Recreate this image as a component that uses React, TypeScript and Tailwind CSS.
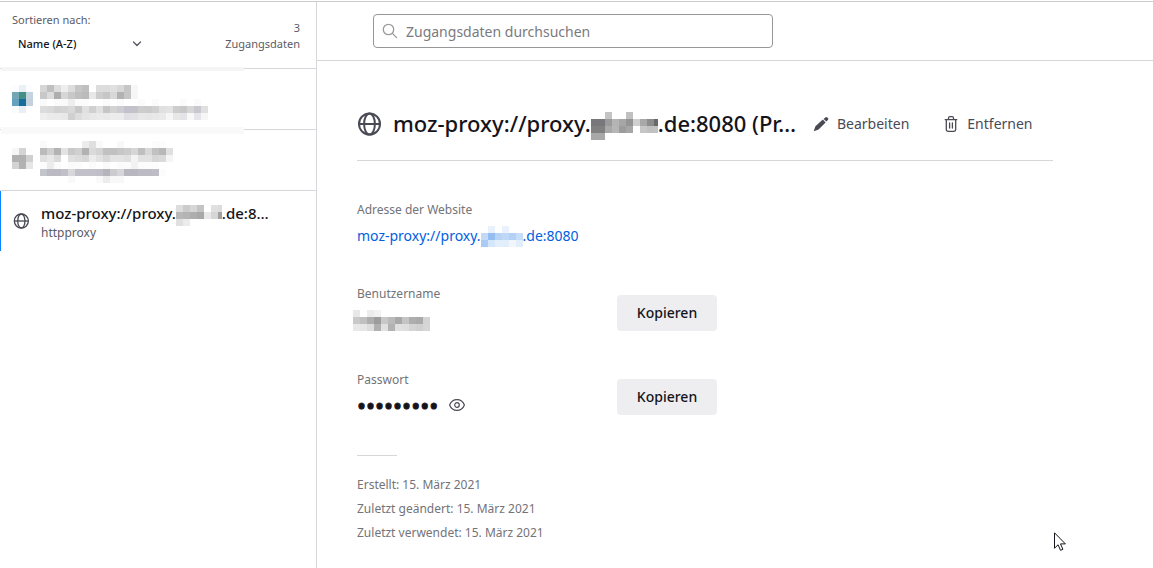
import type { ReactNode } from "react";

const CELL = 7;

/** Pixelated patch that stands in for private text. Cells are hex greys or full hex colours; "--" is empty. */
function Mosaic({ rows, className, label }: { rows: string[]; className?: string; label: string }) {
  const grid = rows.map((row) => row.split(" "));
  const cols = Math.max(...grid.map((row) => row.length));
  return (
    <svg
      role="img"
      aria-label={label}
      width={cols * CELL}
      height={grid.length * CELL}
      shapeRendering="crispEdges"
      className={className}
    >
      {grid.flatMap((row, y) =>
        row.map((cell, x) =>
          cell === "--" ? null : (
            <rect
              key={`${x}-${y}`}
              x={x * CELL}
              y={y * CELL}
              width={CELL}
              height={CELL}
              fill={cell.length === 2 ? `#${cell}${cell}${cell}` : `#${cell}`}
            />
          ),
        ),
      )}
    </svg>
  );
}

const siteIconA = [
  "fafcff e9f0f6 fdfdff",
  "74a7b3 459085 c3d5e0",
  "66a2c0 156f99 c3d1dc",
  "fafbfd e9eff4 --",
];
const siteTextA = [
  "d6 bf dd ee dd c6 bf -- dd dc e0 d8 c6 f7",
  "c8 dc ae d6 c8 bf bb e8 cd c6 d8 b2 c6 f6",
  "fa -- fb fa ee fb fb -- -- fb -- fb -- -- fb -- fb -- -- -- fb -- fb",
  "dc d9 d2 d4 d9 c8 e0 d0 e0 c6 d3 cdccd3 c3c2ca c3c2ca cd cb d0 e0 e3 cd c8 d6 c9c8d0 e0",
  "ee ea ea e8 d0 dd e4 e8 ea e9 ec ec e0e0e4 e2e2e6 e8 e6 e8 ea f6 e7 e4e4e8 f8 e6e6ea f6",
];
const siteIconB = ["f6 d4 fd", "b1 b1 d0", "d3 b2 e6"];
const siteTextB = [
  "fa -- -- -- -- -- ec df f9 -- -- f8 -- -- -- -- fc fc",
  "bb cf b3 e3 c9 d0 b2 da d3 c1 c1 c6 cb d6 bf d8 c1 b8 e0",
  "e0 e8 da -- e0 dc d8 ec e2 d8 e4 e4 e0 f3 e2 e2 d6 da f5",
  "fc ec fb -- fa fb -- fb -- fa -- fb fc f2 fb fc fc",
  "c4c4cc bbbac2 bbbac2 c1c0c8 d8d8dc c2c1c9 c2c1c9 c2c1c9 c0bfc7 b4b4ba cccccf d6d6da b8b7bf b8b7bf bcbbc3 bcbbc3 bebdc5 fc",
  "-- -- -- -- f9 -- -- -- f9 ec f8 f8",
];
const hostSmall = ["dd cb d6 c4 -- e0 dc", "b8 b4 ae a8 e8 d6 a0", "e0 ec"];
const hostTitle = [
  "-- -- c4 -- -- c0 -- -- -- --",
  "78777b 78777b 9a b4 a6 94 d0 a8 8c 69686d",
  "80 80 a8 b6 9c a6 -- c6 c0 c2",
  "a8 a8 -- -- -- -- -- -- -- --",
];
const hostLink = [
  "-- e8f1fc -- e8f1fc -- --",
  "c3daf7 94bef1 b7d3f6 bfd8f7 b3d1f6 c8ddf8",
  "a9cbf4 d6e6fa e3eefb e3eefb f1f6fd e3eefb",
];
const userText = [
  "e8 -- ec f2 -- -- -- -- -- -- --",
  "c8 c0 ae 9c c8 ba a8 c4 ae aa d4",
  "e8 e6 dc b0 e0 b2 e0 de d4 d0 d6",
];

function Globe({ className }: { className: string }) {
  return (
    <svg viewBox="0 0 24 24" fill="none" stroke="currentColor" strokeWidth="2" className={className} aria-hidden="true">
      <circle cx="12.5" cy="12" r="10.5" />
      <ellipse cx="12.5" cy="12" rx="5.4" ry="10.5" />
      <path d="M2 12h21" />
    </svg>
  );
}

function Pencil() {
  return (
    <svg viewBox="0 0 16 16" fill="currentColor" className="size-4" aria-hidden="true">
      <path d="M10.6 2.9 12.3 1.4a1.4 1.4 0 0 1 2 0l.6.6a1.4 1.4 0 0 1 0 2l-1.6 1.6zM9.8 3.6l2.8 2.8-6.8 6.8a2 2 0 0 1-.8.5L1.4 15a.4.4 0 0 1-.5-.5l1.3-3.6a2 2 0 0 1 .5-.8z" />
    </svg>
  );
}

function Trash() {
  return (
    <svg viewBox="0 0 16 16" fill="none" stroke="currentColor" strokeWidth="1.3" strokeLinecap="round" className="size-4" aria-hidden="true">
      <path d="M2.2 3.6h11.6M5.5 3.4V2A1.4 1.4 0 0 1 6.9.7h2.2A1.4 1.4 0 0 1 10.5 2v1.4M3.3 4v9.6A1.7 1.7 0 0 0 5 15.3h6a1.7 1.7 0 0 0 1.7-1.7V4M6.6 7v5M9.4 7v5" />
    </svg>
  );
}

function Eye() {
  return (
    <svg viewBox="0 0 16 16" fill="none" stroke="currentColor" strokeWidth="1.2" className="size-4" aria-hidden="true">
      <path d="M.6 8C1.9 4.7 4.7 2.6 8 2.6S14.1 4.7 15.4 8c-1.3 3.3-4.1 5.4-7.4 5.4S1.9 11.3.6 8z" />
      <circle cx="8" cy="8" r="2.3" />
    </svg>
  );
}

function ListItem({ icon, children }: { icon: ReactNode; children: ReactNode }) {
  return (
    <li className="relative flex h-[61px] items-start border-b border-[#d7d7db] pl-3">
      <span className="w-7 shrink-0">{icon}</span>
      {children}
    </li>
  );
}

function CopyButton() {
  return (
    <button type="button" className="block h-9 w-[100px] rounded bg-[#eeeef0] text-sm font-medium text-[#15141a]">
      Kopieren
    </button>
  );
}

export default function App() {
  return (
    <div className="min-h-screen bg-white pt-px font-['Noto_Sans','Open_Sans',sans-serif] text-[#15141a]">
      <div className="flex min-h-[calc(100vh-1px)] border-t border-[#cccccc]">
        <aside className="w-[317px] shrink-0 border-r border-[#d7d7db]">
          <div className="flex h-[67px] justify-between border-b border-[#d7d7db] pt-2 pr-4 pl-3 text-[#5b5b66]">
            <div className="flex flex-col">
              <label htmlFor="sort" className="text-[11px] leading-5">
                Sortieren nach:
              </label>
              <div className="relative flex items-center">
                <select id="sort" className="h-7 w-[136px] appearance-none bg-transparent pl-[6px] text-[11px] font-medium text-[#15141a]">
                  <option>Name (A-Z)</option>
                </select>
                <svg viewBox="0 0 10 6" fill="none" stroke="currentColor" strokeWidth="1.4" strokeLinecap="round" className="pointer-events-none absolute right-[6px] h-[6px] w-[10px]" aria-hidden="true">
                  <path d="M1.5 1L5 4.5 8.5 1" />
                </svg>
              </div>
            </div>
            <p className="pt-[10px] text-right text-[11px] leading-4">
              3<br />
              Zugangsdaten
            </p>
          </div>

          <ul>
            <ListItem icon={<Mosaic rows={siteIconA} label="Website-Symbol" className="mt-4" />}>
              <Mosaic rows={siteTextA} label="Zugangsdaten" className="mt-4" />
              <span className="absolute -top-[2px] left-px h-1 w-[243px] bg-[#f5f5f5]" />
            </ListItem>
            <ListItem icon={<Mosaic rows={siteIconB} label="Website-Symbol" className="mt-[18px]" />}>
              <Mosaic rows={siteTextB} label="Zugangsdaten" className="mt-[11px]" />
              <span className="absolute -top-[3px] left-px h-[7px] w-[243px] bg-[#f9f9f9]" />
            </ListItem>
            <li className="flex h-[60px] items-center border-l border-[#0a84ff] pl-3">
              <Globe className="mr-3 size-4 text-[#4a4a55]" />
              <div className="flex flex-col gap-[2px] pt-[2px]">
                <p className="flex h-5 items-center text-[15px] font-medium">
                  moz-proxy://proxy.
                  <Mosaic rows={hostSmall} label="verborgen" className="mt-1 w-[46px]" />
                  .de:8…
                </p>
                <p className="text-xs leading-4 text-[#5b5b66]">httpproxy</p>
              </div>
            </li>
          </ul>
        </aside>

        <div className="min-w-0 flex-1">
          <header className="h-[59px] border-b border-[#d7d7db] pt-3 pl-14">
            <div className="relative flex h-[34px] w-[400px] items-center">
              <svg viewBox="0 0 16 16" fill="none" stroke="#9a9a9e" strokeWidth="1.3" strokeLinecap="round" className="pointer-events-none absolute left-[9px] size-4" aria-hidden="true">
                <circle cx="6.5" cy="6.5" r="5.2" />
                <path d="M10.4 10.4l4.2 4.2" />
              </svg>
              <input
                type="search"
                aria-label="Zugangsdaten durchsuchen"
                placeholder="Zugangsdaten durchsuchen"
                className="h-full w-full rounded border border-[#97979a] bg-transparent pr-2 pl-8 text-sm placeholder:text-[#7a7a80]"
              />
            </div>
          </header>

          <main className="max-w-[736px] pl-10">
            <div className="flex h-[100px] items-center border-b border-[#d7d7db] pt-[26px]">
              <Globe className="mr-3 size-6 shrink-0 text-[#4a4a55]" />
              <h1 className="flex h-8 items-center text-[22px] font-medium whitespace-nowrap">
                moz-proxy://proxy.
                <Mosaic rows={hostTitle} label="verborgen" className="mt-1 w-[67px]" />
                .de:8080 (Pr…
              </h1>
              <button type="button" className="ml-[17px] flex items-center gap-2 text-sm text-[#4a4a55]">
                <Pencil />
                Bearbeiten
              </button>
              <button type="button" className="ml-[34px] flex items-center gap-2 text-sm text-[#4a4a55]">
                <Trash />
                Entfernen
              </button>
            </div>

            <section className="pt-[39px]">
              <h2 className="text-xs leading-5 text-[#737378]">Adresse der Website</h2>
              <a href="#website" className="mt-1 flex h-6 items-center text-sm text-[#0060df]">
                moz-proxy://proxy.
                <Mosaic rows={hostLink} label="verborgen" />
                .de:8080
              </a>
            </section>

            <section className="flex pt-9">
              <div className="w-[260px]">
                <h2 className="text-xs leading-5 text-[#737378]">Benutzername</h2>
                <Mosaic rows={userText} label="Benutzername verborgen" className="mt-[6px] -ml-1" />
              </div>
              <div className="pt-[11px]">
                <CopyButton />
              </div>
            </section>

            <section className="flex pt-[39px]">
              <div className="w-[260px]">
                <label htmlFor="password" className="block text-xs leading-5 text-[#737378]">
                  Passwort
                </label>
                <div className="mt-[3px] flex h-6 items-center">
                  <input
                    id="password"
                    type="password"
                    readOnly
                    defaultValue="geheimnis"
                    className="h-6 w-[92px] bg-transparent text-[24px] leading-6 [-webkit-text-stroke:1px_#15141a]"
                  />
                  <button type="button" aria-label="Passwort anzeigen" className="text-[#4a4a55]">
                    <Eye />
                  </button>
                </div>
              </div>
              <div className="pt-[9px]">
                <CopyButton />
              </div>
            </section>

            <hr className="mt-[38px] w-10 border-[#d7d7db]" />
            <div className="pt-[17px] text-xs leading-6 text-[#737378]">
              <p>Erstellt: 15. März 2021</p>
              <p>Zuletzt geändert: 15. März 2021</p>
              <p>Zuletzt verwendet: 15. März 2021</p>
            </div>
          </main>
        </div>
      </div>

      <svg viewBox="0 0 12 19" className="pointer-events-none absolute top-[532px] left-[1054px] h-[19px] w-3" aria-hidden="true">
        <path d="M.5.8v15.4l3.6-3.4 2.4 5.5 2.4-1-2.4-5.4h4.9z" fill="#fff" stroke="#15141a" strokeWidth="1" />
      </svg>
    </div>
  );
}
